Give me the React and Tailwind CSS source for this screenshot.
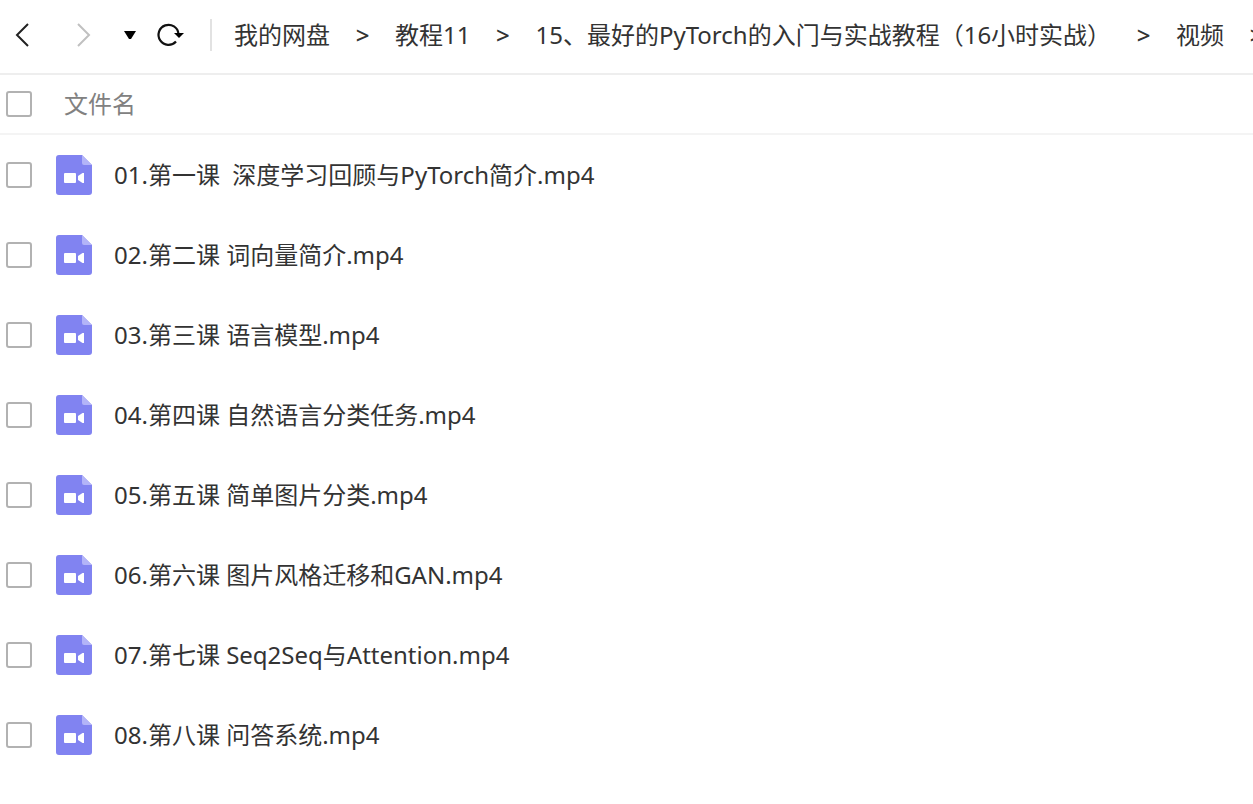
import React, { useState } from 'react';

const crumbs = ['我的网盘', '教程11', '15、最好的PyTorch的入门与实战教程（16小时实战）', '视频'];

const files = [
  '01.第一课  深度学习回顾与PyTorch简介.mp4',
  '02.第二课 词向量简介.mp4',
  '03.第三课 语言模型.mp4',
  '04.第四课 自然语言分类任务.mp4',
  '05.第五课 简单图片分类.mp4',
  '06.第六课 图片风格迁移和GAN.mp4',
  '07.第七课 Seq2Seq与Attention.mp4',
  '08.第八课 问答系统.mp4',
];

const VideoIcon = () => (
  <svg width="36" height="40" viewBox="0 0 36 40" className="shrink-0" aria-hidden="true">
    <path d="M3 0H26L36 10V37a3 3 0 0 1-3 3H3a3 3 0 0 1-3-3V3a3 3 0 0 1 3-3z" fill="#8183f1" />
    <path d="M26 0L36 10H28a2 2 0 0 1-2-2z" fill="#b3b4f8" />
    <rect x="8" y="18" width="12" height="10" rx="1" fill="#fff" />
    <path d="M28 18V28H26.500L22 25V21L26.500 18z" fill="#fff" />
  </svg>
);

const Checkbox = ({ label, checked, onChange }) => (
  <input
    type="checkbox"
    aria-label={label}
    checked={checked}
    onChange={onChange}
    className="size-[26px] shrink-0 appearance-none rounded-[3px] border-2 border-[#b2b2b2] bg-white checked:border-[#8183f1] checked:bg-[#8183f1]"
  />
);

const Toolbar = () => (
  <header className="flex h-[75px] items-center overflow-hidden border-b-2 border-[#eeeeee] pb-1 pl-3">
    <button type="button" aria-label="后退" className="shrink-0">
      <svg width="20" height="26" viewBox="0 0 20 26" fill="none" stroke="#222" strokeWidth="2">
        <path d="M16 2L5 13L16 24" />
      </svg>
    </button>
    <button type="button" aria-label="前进" className="ml-[42px] shrink-0">
      <svg width="20" height="26" viewBox="0 0 20 26" fill="none" stroke="#c0c0c0" strokeWidth="2">
        <path d="M4 2L15 13L4 24" />
      </svg>
    </button>
    <button type="button" aria-label="历史记录" className="ml-[30px] shrink-0">
      <svg width="12" height="10" viewBox="0 0 12 10">
        <path d="M0 1H12L7 9H5z" fill="#000" />
      </svg>
    </button>
    <button type="button" aria-label="刷新" className="ml-5 shrink-0">
      <svg width="30" height="26" viewBox="0 0 30 26">
        <path d="M22.500 12A10 10 0 1 0 20 19.500" fill="none" stroke="#111" strokeWidth="2.200" />
        <path d="M18 11H28L23 16z" fill="#000" />
      </svg>
    </button>
    <div className="ml-6 h-8 w-0.5 shrink-0 bg-[#e2e2e2]" />
    <nav className="ml-[22px] flex shrink-0 items-center whitespace-nowrap text-[#333]">
      {crumbs.map((name) => (
        <React.Fragment key={name}>
          <a href="#">{name}</a>
          <span className="w-[65px] text-center font-medium">&gt;</span>
        </React.Fragment>
      ))}
    </nav>
  </header>
);

const App = () => {
  const [selected, setSelected] = useState([]);

  const toggle = (name) => {
    setSelected(selected.includes(name) ? selected.filter((n) => n !== name) : [...selected, name]);
  };

  const toggleAll = () => {
    setSelected(selected.length === files.length ? [] : files);
  };

  return (
    <div className="min-h-screen overflow-hidden bg-white font-['Noto_Sans','Noto_Sans_CJK_SC',sans-serif] text-2xl text-[#333]">
      <Toolbar />
      <table className="w-full border-separate border-spacing-0 text-left">
        <thead>
          <tr>
            <th className="h-[60px] border-b-2 border-[#f4f4f4] p-0 font-normal text-[#818181]">
              <div className="flex items-center pl-1.5">
                <Checkbox label="全选" checked={selected.length === files.length} onChange={toggleAll} />
                <span className="ml-8">文件名</span>
              </div>
            </th>
          </tr>
        </thead>
        <tbody>
          {files.map((name) => (
            <tr key={name}>
              <td className="h-20 p-0">
                <div className="flex items-center pl-1.5">
                  <Checkbox label={name} checked={selected.includes(name)} onChange={() => toggle(name)} />
                  <div className="ml-6 flex items-center gap-[22px]">
                    <VideoIcon />
                    <span className="whitespace-pre">{name}</span>
                  </div>
                </div>
              </td>
            </tr>
          ))}
        </tbody>
      </table>
    </div>
  );
};

export default App;
